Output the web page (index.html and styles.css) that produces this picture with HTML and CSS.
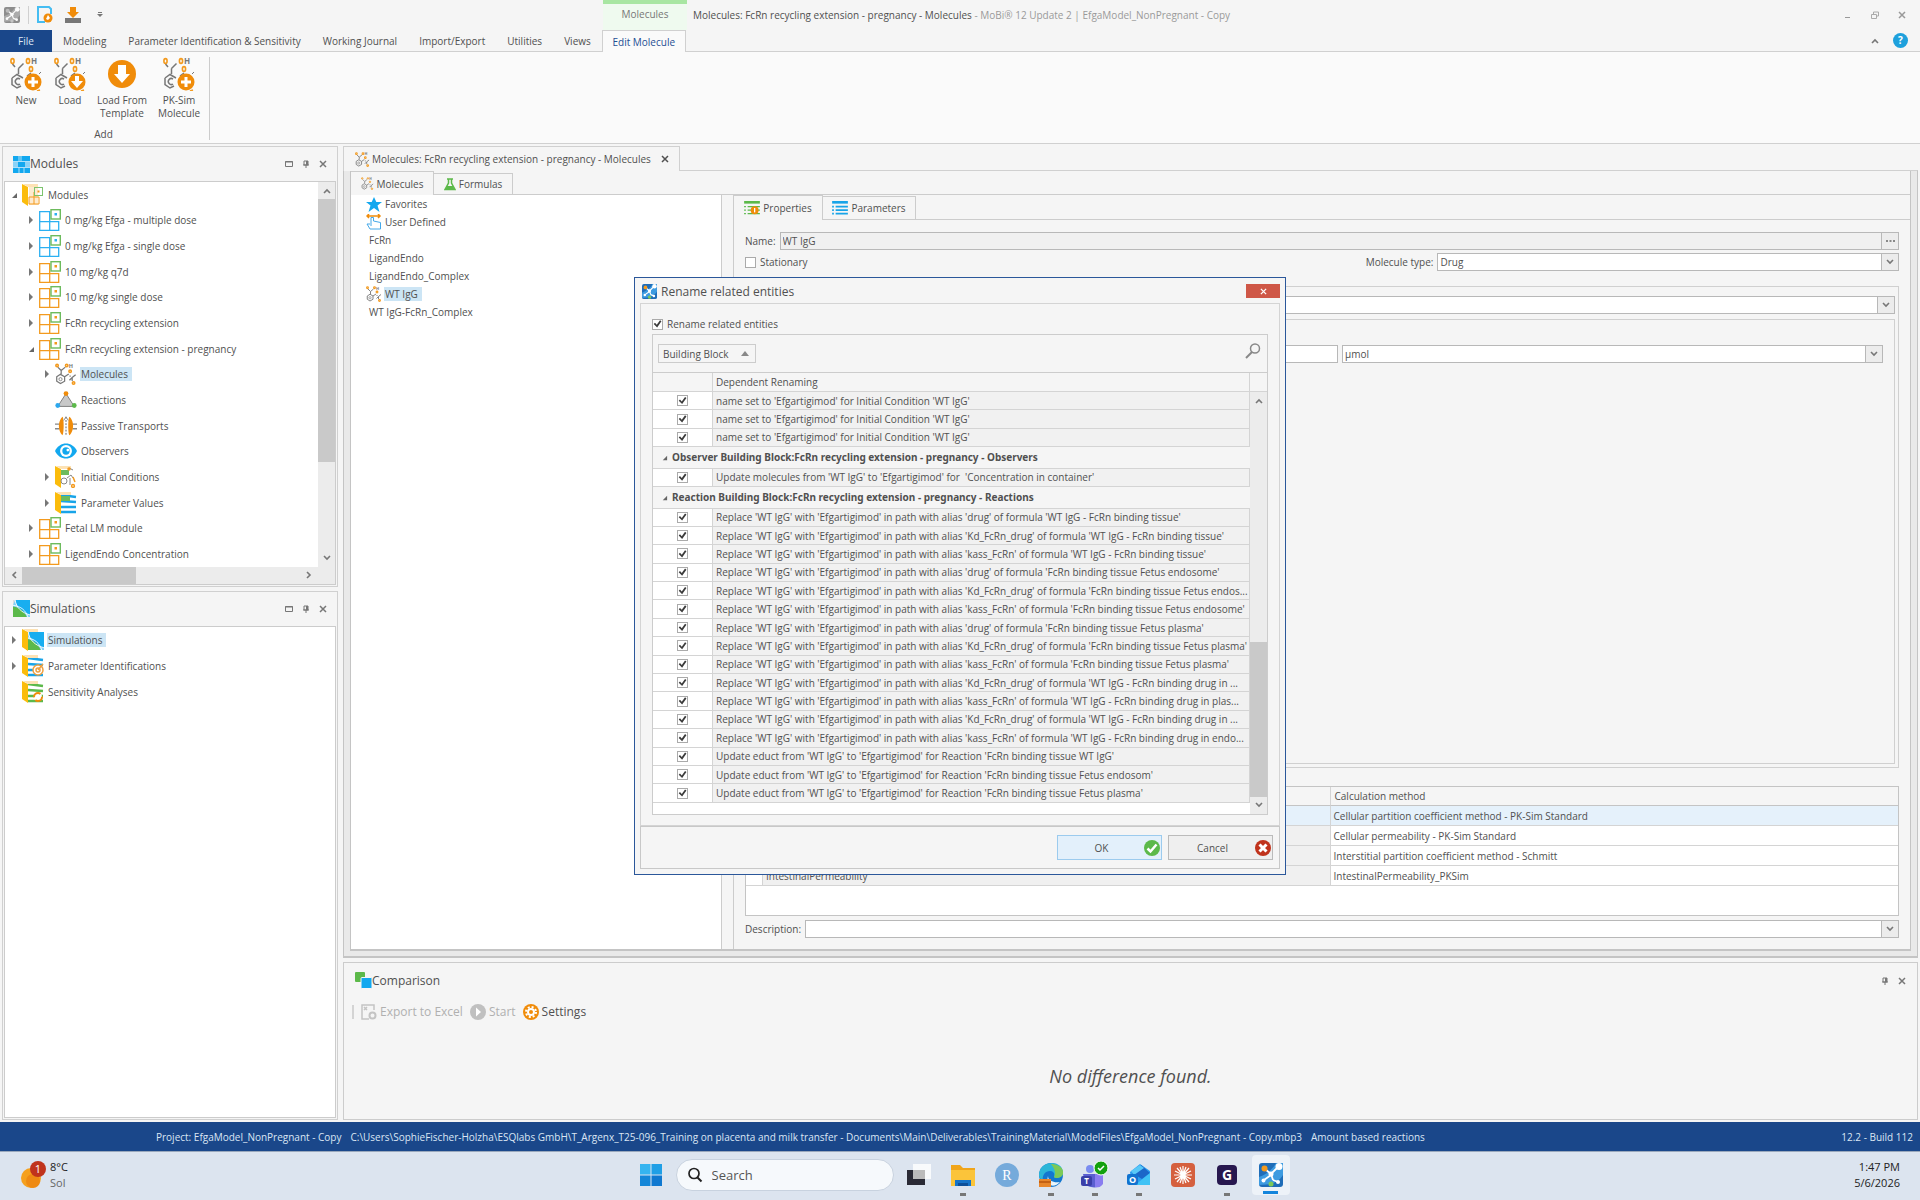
FILE: index.html
```html
<!DOCTYPE html>
<html lang="en">
<head>
<meta charset="utf-8">
<title>MoBi 12 - EfgaModel_NonPregnant</title>
<link rel="stylesheet" href="styles.css">
</head>
<body>
<svg class="sprite" aria-hidden="true">
  <symbol id="mol" viewBox="0 0 32 32">
    <g fill="none" stroke="#777" stroke-width="1.800"><path d="M2.500 20l5.500-3.500 6 3.500v6.500L8 30l-5.500-3.500zM14 20l6-4M9 16V11M9 11L4 6M9 11l6-5M22 20v-2M21 25l4-4 5-4M25 21v5"/><circle cx="8" cy="23.500" r="2.300" stroke-width="1.200"/></g>
    <g fill="none" stroke="#f39a1e" stroke-width="2.200"><circle cx="3" cy="3.500" r="1.800"/><circle cx="17" cy="3.500" r="1.800"/><circle cx="22" cy="12" r="1.800"/><circle cx="27" cy="29" r="1.800"/></g>
    <text x="20" y="7" font-size="8" font-weight="700" fill="#777">H</text>
  </symbol>
  <symbol id="molbig" viewBox="0 0 32 34">
    <g fill="none" stroke="#777" stroke-width="1.500"><path d="M2 21l5-3.500 6 3.500M2 21v6.500l5 3.500 4-2M8.500 17v-5.500M8.500 11.500l5-5M5 10L2.500 7M17 19l4-3"/><path d="M10 22a3 3 0 1 0 0 5"/></g>
    <g fill="none" stroke="#f39a1e" stroke-width="1.600"><ellipse cx="2.500" cy="4" rx="1.600" ry="2.400"/><ellipse cx="18" cy="4" rx="1.600" ry="2.400"/><ellipse cx="21" cy="12" rx="1.600" ry="2.400"/></g>
    <text x="21" y="7" font-size="8" font-weight="700" fill="#777">H</text>
    <circle cx="23" cy="25" r="8.500" fill="#f08c0a"/>
    <path d="M27 34l3-1" stroke="#f39a1e" stroke-width="1.500"/><path d="M29 17l2-2" stroke="#777"/>
  </symbol>
  <symbol id="plus" viewBox="0 0 32 34"><path d="M23 20v10M18 25h10" stroke="#fff" stroke-width="3"/></symbol>
  <symbol id="down" viewBox="0 0 32 34"><path d="M21 19h4v5h4l-6 7-6-7h4z" fill="#fff"/></symbol>
  <symbol id="module" viewBox="0 0 22 22">
    <path d="M.7 2.700h10V21.300H.7zM.7 12.700h19V21.300H.7M10.700 4v17" fill="none" stroke="currentColor" stroke-width="1.300"/>
    <rect x="12" y=".7" width="9.300" height="9.300" fill="#fff" stroke="#6dbb5d" stroke-width="1.400"/>
    <rect x="15.500" y="4" width="2.500" height="2.500" fill="currentColor"/>
  </symbol>
  <symbol id="door" viewBox="0 0 22 22"><path d="M0 0l6 3v19l-6-4z" fill="#fbbc0c"/><path d="M1 0h15v3H6z" fill="#fde2b4"/></symbol>
  <symbol id="fmod" viewBox="0 0 22 22"><use href="#door"/><path d="M7 3h9v18H7z" fill="#fdebd0"/><path d="M7 13h10v7H7zM12 8v12" fill="none" stroke="#f39a1e"/><rect x="12.500" y="3.500" width="8" height="8" fill="none" stroke="#7cc46d"/><rect x="15.500" y="6.500" width="2" height="2" fill="#f39a1e"/></symbol>
  <symbol id="fic" viewBox="0 0 22 22"><use href="#door"/><rect x="6" y="4" width="8" height="5" fill="#6dbb5d"/><g fill="none" stroke="#888"><circle cx="9" cy="15" r="3"/><path d="M12 12l4-3 2 3M15 12v7M14 2l4 2"/></g><g fill="none" stroke="#f39a1e" stroke-width="1.500"><circle cx="14" cy="3" r="1"/><circle cx="18" cy="20" r="1.400"/><path d="M18 11l2 5"/></g></symbol>
  <symbol id="lines" viewBox="0 0 22 22"><path d="M6 3l15 2M6 9l15 1M6 15h15M6 20h15" stroke="currentColor" stroke-width="2.600"/></symbol>
  <symbol id="fpv" viewBox="0 0 22 22"><use href="#lines" color="#18a4e8"/><use href="#door"/><rect x="6" y="4" width="9" height="5" fill="#6dbb5d"/></symbol>
  <symbol id="fpi" viewBox="0 0 22 22"><use href="#lines" color="#18a4e8"/><use href="#door"/><g fill="#fff" stroke="#f0a040" stroke-width="1.500"><circle cx="16" cy="15" r="5"/><circle cx="16" cy="15" r="2"/><path d="M16 15l5-6"/></g></symbol>
  <symbol id="fsa" viewBox="0 0 22 22"><use href="#lines" color="#5cb94a"/><use href="#door"/><circle cx="16" cy="16" r="4" fill="#fff" stroke="#f08c0a" stroke-width="2" stroke-dasharray="9 3"/></symbol>
  <symbol id="sim" viewBox="0 0 16 16"><path d="M2 0h14v15C8 13 3 7 2 0z" fill="#18aef0"/><path d="M2 0c1 7 6 12 14 14v2H0V0z" fill="#7fd0f8"/><path d="M0 0h2l-2 5z" fill="#ddd"/><path d="M0 6c7 1 11 5 13 10H0z" fill="#5cb94a"/><path d="M0 5c8 1 12 5 14 11M2 0c1 7 6 12 14 14" fill="none" stroke="#fff" stroke-width=".8"/></symbol>
  <symbol id="fsim" viewBox="0 0 22 22"><use href="#sim" x="4" y="3" width="18" height="18"/><use href="#door"/></symbol>
  <symbol id="react" viewBox="0 0 24 20"><path d="M12 3L3 17h18z" fill="#c8c8c8" stroke="#777"/><circle cx="12" cy="3" r="2.600" fill="#f08c0a"/><circle cx="3" cy="16" r="2.600" fill="#2ca8ee"/><circle cx="21" cy="16" r="2.600" fill="#5cb94a"/></symbol>
  <symbol id="passive" viewBox="0 0 24 22"><path d="M0 9h5M0 14h5M19 9h5M19 14h5" stroke="#888" stroke-width="1.500"/><path d="M8 1c-5 5-5 15 0 20 2 0 2-20 0-20zM16 1c5 5 5 15 0 20-2 0-2-20 0-20z" fill="#f08c0a"/><path d="M12 1v20" stroke="#555" stroke-dasharray="2 1.500"/><path d="M9.500 5L12 1l2.500 4" fill="none" stroke="#888"/></symbol>
  <symbol id="eye" viewBox="0 0 24 18"><path d="M0 9C5-2 19-2 24 9 19 20 5 20 0 9z" fill="#12a8ef"/><circle cx="12" cy="9" r="6.500" fill="#fff"/><circle cx="12" cy="9" r="4" fill="#12a8ef"/><circle cx="14" cy="8" r="1.500" fill="#fff"/></symbol>
  <symbol id="expand" viewBox="0 0 8 8"><path d="M2 0l4 4-4 4z" fill="#777"/></symbol>
  <symbol id="collapse" viewBox="0 0 8 8"><path d="M7 2v5H2z" fill="#666"/></symbol>
  <symbol id="cu" viewBox="0 0 8 8"><path d="M1 6l3-3 3 3" fill="none" stroke="#777" stroke-width="1.600"/></symbol>
  <symbol id="cd" viewBox="0 0 8 8"><path d="M1 2l3 3 3-3" fill="none" stroke="#777" stroke-width="1.600"/></symbol>
  <symbol id="cl" viewBox="0 0 8 8"><path d="M6 1L3 4l3 3" fill="none" stroke="#777" stroke-width="1.600"/></symbol>
  <symbol id="cr" viewBox="0 0 8 8"><path d="M2 1l3 3-3 3" fill="none" stroke="#777" stroke-width="1.600"/></symbol>
  <symbol id="x" viewBox="0 0 8 8"><path d="M1 1l6 6M7 1L1 7" fill="none" stroke="currentColor" stroke-width="1.500"/></symbol>
  <symbol id="win" viewBox="0 0 8 8"><path d="M.5 1.500h7v5h-7zM0 2h8" fill="none" stroke="#777"/></symbol>
  <symbol id="pin" viewBox="0 0 8 8"><path d="M2 1h4v4H2zM1 5h6M4 5v3" fill="none" stroke="#777"/><path d="M4 1h2v4H4z" fill="#777"/></symbol>
  <symbol id="mobi" viewBox="0 0 24 24"><rect width="24" height="24" rx="3" fill="#1f6db8"/><path d="M0 14c8-3 14-8 17-14h7v12c-5 8-12 10-24 10z" fill="#3d9be0"/><path d="M6 6l6 5 7-7M12 11l2 6M12 12l-7 5M14 17l5 2" stroke="#fff" stroke-width="1.800" fill="none"/><circle cx="5.500" cy="5.500" r="3" fill="#f39a1e"/><g fill="#fff"><circle cx="20" cy="3.500" r="3.500"/><circle cx="12" cy="11" r="2.500"/><circle cx="19" cy="19" r="2"/><circle cx="4.500" cy="17.500" r="2"/></g><circle cx="12" cy="21" r="2.500" fill="#7cc957"/></symbol>
  <symbol id="props" viewBox="0 0 18 16"><path d="M0 1.500h18" stroke="#5cb94a" stroke-width="3"/><path d="M0 6.500h2M4 6.500h14M0 10.500h2M4 10.500h14M0 14.500h2M4 14.500h14" stroke="#5cb94a" stroke-width="1.500"/><circle cx="12" cy="10.500" r="4.500" fill="#f08c0a"/><path d="M12 8v5" stroke="#fff" stroke-width="1.500"/></symbol>
  <symbol id="params" viewBox="0 0 18 16"><path d="M0 1.500h18" stroke="#18a4e8" stroke-width="3"/><path d="M0 6.500h2M4 6.500h14M0 10.500h2M4 10.500h14M0 14.500h2M4 14.500h14" stroke="#18a4e8" stroke-width="2"/></symbol>
</svg>

<div class="desktop">
<div class="app">
  <header>
    <div class="titlebar">
      <div class="quick">
        <svg width="16" height="16" class="grey"><use href="#mobi"/></svg>
        <span class="bar"></span>
        <button aria-label="Open project"><svg width="16" height="18" viewBox="0 0 16 18"><path d="M14 8V3l-2-2H1v15h7" fill="none" stroke="#45bdf2" stroke-width="2"/><circle cx="11" cy="12" r="4.500" fill="#f08c0a"/><path d="M11 9l2 3-2 2-2-1z" fill="#fff"/></svg></button>
        <button aria-label="Save project"><svg width="16" height="16" viewBox="0 0 16 16"><path d="M5 0h6v5h3l-6 6-6-6h3z" fill="#f08c0a"/><path d="M0 11h16v5H0z" fill="#777"/></svg></button>
        <button aria-label="Customize"><svg width="6" height="6" viewBox="0 0 6 6"><path d="M1 .5h4" stroke="#777"/><path d="M0 2h6L3 5z" fill="#777"/></svg></button>
      </div>
      <div class="context">Molecules</div>
      <h1>Molecules: FcRn recycling extension - pregnancy - Molecules <span>- MoBi® 12 Update 2 | EfgaModel_NonPregnant - Copy</span></h1>
      <div class="winbtns">
        <button aria-label="Minimize"><svg width="8" height="8"><path d="M1 6.500h5" stroke="#999"/></svg></button>
        <button aria-label="Restore"><svg width="8" height="8"><path d="M.5 3.500h5v4h-5zM2.500 3v-2h5v4H6" fill="none" stroke="#aaa"/></svg></button>
        <button aria-label="Close"><svg width="8" height="8" color="#999"><use href="#x"/></svg></button>
      </div>
    </div>
    <nav class="tabs">
      <button class="file">File</button>
      <button>Modeling</button>
      <button>Parameter Identification &amp; Sensitivity</button>
      <button>Working Journal</button>
      <button>Import/Export</button>
      <button>Utilities</button>
      <button>Views</button>
      <button class="active">Edit Molecule</button>
      <span class="help"><svg width="8" height="8"><use href="#cu"/></svg><span class="q">?</span></span>
    </nav>
    <div class="ribbon">
      <div class="group">
        <div class="big">
          <button class="b1"><svg width="32" height="34"><use href="#molbig"/><use href="#plus"/></svg>New</button>
          <button class="b1"><svg width="32" height="34"><use href="#molbig"/><use href="#down"/></svg>Load</button>
          <button class="b2"><svg width="32" height="34" viewBox="0 0 32 34"><circle cx="16" cy="17" r="14" fill="#f08c0a"/><path d="M12 8h8v9h4l-8 9-8-9h4z" fill="#fff"/></svg>Load From<br>Template</button>
          <button class="b3"><svg width="32" height="34"><use href="#molbig"/><use href="#plus"/></svg>PK-Sim<br>Molecule</button>
        </div>
        <div class="gname">Add</div>
      </div>
    </div>
  </header>

  <div class="work">
    <aside class="left">
      <section class="panel p1">
        <div class="phead"><svg width="17" height="17" viewBox="0 0 17 17"><path d="M0 0h17v17H0z" fill="#12a8ef"/><path d="M0 5.500h17M0 11.500h17M6 0v5M11 12v5M8 0v5M6 12v5" stroke="#d8effb" stroke-width=".8"/><path d="M0 6h5v5H0zM12 6h5v5h-5z" fill="#8bd3f7"/></svg><h2>Modules</h2><span class="pbtns"><svg width="8" height="8"><use href="#win"/></svg><svg width="8" height="8"><use href="#pin"/></svg><svg width="8" height="8"><use href="#x"/></svg></span></div>
        <div class="scroller">
          <ul class="tree">
            <li><svg class="e"><use href="#collapse"/></svg><svg class="i"><use href="#fmod"/></svg><span>Modules</span></li>
            <li class="l1 blue"><svg class="e"><use href="#expand"/></svg><svg class="i"><use href="#module"/></svg><span>0 mg/kg Efga - multiple dose</span></li>
            <li class="l1 blue"><svg class="e"><use href="#expand"/></svg><svg class="i"><use href="#module"/></svg><span>0 mg/kg Efga - single dose</span></li>
            <li class="l1"><svg class="e"><use href="#expand"/></svg><svg class="i"><use href="#module"/></svg><span>10 mg/kg q7d</span></li>
            <li class="l1"><svg class="e"><use href="#expand"/></svg><svg class="i"><use href="#module"/></svg><span>10 mg/kg single dose</span></li>
            <li class="l1"><svg class="e"><use href="#expand"/></svg><svg class="i"><use href="#module"/></svg><span>FcRn recycling extension</span></li>
            <li class="l1"><svg class="e"><use href="#collapse"/></svg><svg class="i"><use href="#module"/></svg><span>FcRn recycling extension - pregnancy</span></li>
            <li class="l2"><svg class="e"><use href="#expand"/></svg><svg class="i"><use href="#mol"/></svg><span class="sel">Molecules</span></li>
            <li class="l2"><svg class="e"></svg><svg class="i"><use href="#react"/></svg><span>Reactions</span></li>
            <li class="l2"><svg class="e"></svg><svg class="i"><use href="#passive"/></svg><span>Passive Transports</span></li>
            <li class="l2"><svg class="e"></svg><svg class="i"><use href="#eye"/></svg><span>Observers</span></li>
            <li class="l2"><svg class="e"><use href="#expand"/></svg><svg class="i"><use href="#fic"/></svg><span>Initial Conditions</span></li>
            <li class="l2"><svg class="e"><use href="#expand"/></svg><svg class="i"><use href="#fpv"/></svg><span>Parameter Values</span></li>
            <li class="l1"><svg class="e"><use href="#expand"/></svg><svg class="i"><use href="#module"/></svg><span>Fetal LM module</span></li>
            <li class="l1"><svg class="e"><use href="#expand"/></svg><svg class="i"><use href="#module"/></svg><span>LigendEndo Concentration</span></li>
          </ul>
          <div class="vsb"><svg width="8" height="8"><use href="#cu"/></svg><div class="track"><div class="thumb tall"></div></div><svg width="8" height="8"><use href="#cd"/></svg></div>
          <div class="hsb"><svg width="8" height="8"><use href="#cl"/></svg><div class="track"><div class="thumb"></div></div><svg width="8" height="8"><use href="#cr"/></svg></div>
          <div class="nook"></div>
        </div>
      </section>
      <section class="panel p2">
        <div class="phead"><svg width="17" height="17"><use href="#sim"/></svg><h2>Simulations</h2><span class="pbtns"><svg width="8" height="8"><use href="#win"/></svg><svg width="8" height="8"><use href="#pin"/></svg><svg width="8" height="8"><use href="#x"/></svg></span></div>
        <ul class="tree fixed">
          <li><svg class="e"><use href="#expand"/></svg><svg class="i"><use href="#fsim"/></svg><span class="sel">Simulations</span></li>
          <li><svg class="e"><use href="#expand"/></svg><svg class="i"><use href="#fpi"/></svg><span>Parameter Identifications</span></li>
          <li><svg class="e"></svg><svg class="i"><use href="#fsa"/></svg><span>Sensitivity Analyses</span></li>
        </ul>
      </section>
    </aside>

    <main>
      <div class="doctabs"><button><svg width="15" height="15"><use href="#mol"/></svg>Molecules: FcRn recycling extension - pregnancy - Molecules<svg class="dx" width="8" height="8"><use href="#x"/></svg></button></div>
      <div class="frame">
        <div class="doc">
          <div class="subtabs"><button class="on"><svg width="13" height="13"><use href="#mol"/></svg>Molecules</button><button><svg width="12" height="13" viewBox="0 0 12 13"><path d="M3 1h6M4.500 1v4L1 11.500h10L7.500 5V1" fill="none" stroke="#5cb94a" stroke-width="1.500"/><path d="M3 8h6l2 4H1z" fill="#5cb94a"/></svg>Formulas</button></div>
          <div class="split">
            <ul class="mols">
              <li class="ic"><svg width="16" height="15" viewBox="0 0 16 15"><path d="M8 0l2.300 5H16l-4.500 3.500L13.500 15 8 11l-5.500 4 2-6.500L0 5h5.700z" fill="#12a8ef"/></svg><span>Favorites</span></li>
              <li class="ic"><svg width="16" height="16" viewBox="0 0 16 16"><path d="M1 2h13M3 0L1 2l2 2M12 0l2 2-2 2" fill="none" stroke="#f08c0a" stroke-width="1.500"/><path d="M5 12V3.500h2.500V7l7 1.500V15H4L1 10h3" fill="#fff" stroke="#45a8e8"/></svg><span>User Defined</span></li>
              <li><span>FcRn</span></li>
              <li><span>LigandEndo</span></li>
              <li><span>LigandEndo_Complex</span></li>
              <li class="ic"><svg width="16" height="16"><use href="#mol"/></svg><span class="sel">WT IgG</span></li>
              <li><span>WT IgG-FcRn_Complex</span></li>
            </ul>
            <div class="editor">
              <div class="subtabs"><button class="on"><svg width="16" height="14"><use href="#props"/></svg>Properties</button><button><svg width="16" height="14"><use href="#params"/></svg>Parameters</button></div>
              <form class="page">
                <div class="row"><label for="nm">Name:</label><div class="box ro"><input id="nm" value="WT IgG" readonly><button type="button" aria-label="Edit name"><svg width="9" height="2" viewBox="0 0 9 2"><path d="M0 0h2v2H0zM3.500 0h2v2h-2zM7 0h2v2H7z" fill="#888"/></svg></button></div></div>
                <div class="row sp"><label class="ck"><input type="checkbox">Stationary</label><label class="push" for="mt">Molecule type:</label><div class="box w40"><select id="mt"><option>Drug</option></select><span class="dd"><svg width="8" height="8"><use href="#cd"/></svg></span></div></div>
                <div class="outer">
                  <div class="box"><select aria-label="Default start amount type"><option></option></select><span class="dd"><svg width="8" height="8"><use href="#cd"/></svg></span></div>
                  <div class="inner">
                    <div class="row amount"><div class="box"><input aria-label="Start amount"></div><div class="box"><select aria-label="Unit"><option>µmol</option></select><span class="dd"><svg width="8" height="8"><use href="#cd"/></svg></span></div></div>
                  </div>
                </div>
                <div class="tbox">
                  <table class="calc">
                    <thead><tr><th class="ind"></th><th></th><th>Calculation method</th></tr></thead>
                    <tbody>
                      <tr class="hot"><td></td><td></td><td>Cellular partition coefficient method - PK-Sim Standard</td></tr>
                      <tr><td></td><td></td><td>Cellular permeability - PK-Sim Standard</td></tr>
                      <tr><td></td><td></td><td>Interstitial partition coefficient method - Schmitt</td></tr>
                      <tr><td></td><td>IntestinalPermeability</td><td>IntestinalPermeability_PKSim</td></tr>
                    </tbody>
                  </table>
                </div>
                <div class="row"><label for="ds">Description:</label><div class="box"><input id="ds"><span class="dd"><svg width="8" height="8"><use href="#cd"/></svg></span></div></div>
              </form>
            </div>
          </div>
        </div>
      </div>
      <section class="compare">
        <div class="chead"><svg width="17" height="17" viewBox="0 0 17 17"><rect y="0" width="10" height="10" rx="1" fill="#5cb94a"/><rect x="6" y="5.500" width="11" height="11" rx="1" fill="#12a8ef" stroke="#f5f5f5"/></svg><h2>Comparison</h2><span class="pbtns"><svg width="8" height="8"><use href="#pin"/></svg><svg width="8" height="8"><use href="#x"/></svg></span></div>
        <div class="ctools">
          <span class="grip"></span>
          <button disabled><svg width="16" height="16" viewBox="0 0 16 16"><path d="M13 6V1H1v14h7M3 3l3 3M6 3L3 6" fill="none" stroke="#c4c4c4" stroke-width="1.500"/><circle cx="11.500" cy="11.500" r="3" fill="none" stroke="#c4c4c4" stroke-width="2"/></svg>Export to Excel</button>
          <button disabled><svg width="16" height="16" viewBox="0 0 16 16"><circle cx="8" cy="8" r="8" fill="#c0c0c0"/><path d="M6 3.500l5 4.500-5 4.500z" fill="#fff"/></svg>Start</button>
          <button><svg width="16" height="16" viewBox="0 0 16 16"><circle cx="8" cy="8" r="8" fill="#f08c0a"/><circle cx="8" cy="8" r="3" fill="none" stroke="#fff" stroke-width="2"/><circle cx="8" cy="8" r="5" fill="none" stroke="#fff" stroke-width="2" stroke-dasharray="2 1.930"/></svg>Settings</button>
        </div>
        <p class="nodiff">No difference found.</p>
      </section>
    </main>
  </div>

  <footer class="status"><span>Project: EfgaModel_NonPregnant - Copy</span><span>C:\Users\SophieFischer-Holzha\ESQlabs GmbH\T_Argenx_T25-096_Training on placenta and milk transfer - Documents\Main\Deliverables\TrainingMaterial\ModelFiles\EfgaModel_NonPregnant - Copy.mbp3</span><span>Amount based reactions</span><span class="ver">12.2 - Build 112</span></footer>

  <div class="overlay">
    <div class="dialog" role="dialog" aria-labelledby="dt">
      <div class="dhead"><svg width="15" height="15"><use href="#mobi"/></svg><h2 id="dt">Rename related entities</h2><button aria-label="Close dialog"><svg width="7" height="7"><use href="#x"/></svg></button></div>
      <div class="dbody">
        <label class="ck"><input type="checkbox" checked>Rename related entities</label>
        <div class="grid">
          <div class="gpanel"><button>Building Block<svg width="8" height="5" viewBox="0 0 8 5"><path d="M4 0l4 5H0z" fill="#888"/></svg></button><svg width="16" height="17" viewBox="0 0 16 17"><circle cx="10" cy="5.500" r="4.500" fill="none" stroke="#888" stroke-width="1.500"/><path d="M7 9l-6 6" stroke="#888" stroke-width="2"/></svg></div>
          <div class="gmain">
            <table class="deps">
              <thead><tr><th class="c"></th><th>Dependent Renaming</th></tr></thead>
              <tbody>
                <tr><td><input type="checkbox" checked aria-label="Apply"></td><td>name set to 'Efgartigimod' for Initial Condition 'WT IgG'</td></tr>
                <tr><td><input type="checkbox" checked aria-label="Apply"></td><td>name set to 'Efgartigimod' for Initial Condition 'WT IgG'</td></tr>
                <tr><td><input type="checkbox" checked aria-label="Apply"></td><td>name set to 'Efgartigimod' for Initial Condition 'WT IgG'</td></tr>
                <tr class="g"><th colspan="2"><svg width="7" height="7"><use href="#collapse"/></svg>Observer Building Block:FcRn recycling extension - pregnancy - Observers</th></tr>
                <tr><td><input type="checkbox" checked aria-label="Apply"></td><td>Update molecules from 'WT IgG' to 'Efgartigimod' for &nbsp;'Concentration in container'</td></tr>
                <tr class="g"><th colspan="2"><svg width="7" height="7"><use href="#collapse"/></svg>Reaction Building Block:FcRn recycling extension - pregnancy - Reactions</th></tr>
                <tr><td><input type="checkbox" checked aria-label="Apply"></td><td>Replace 'WT IgG' with 'Efgartigimod' in path with alias 'drug' of formula 'WT IgG - FcRn binding tissue'</td></tr>
                <tr><td><input type="checkbox" checked aria-label="Apply"></td><td>Replace 'WT IgG' with 'Efgartigimod' in path with alias 'Kd_FcRn_drug' of formula 'WT IgG - FcRn binding tissue'</td></tr>
                <tr><td><input type="checkbox" checked aria-label="Apply"></td><td>Replace 'WT IgG' with 'Efgartigimod' in path with alias 'kass_FcRn' of formula 'WT IgG - FcRn binding tissue'</td></tr>
                <tr><td><input type="checkbox" checked aria-label="Apply"></td><td>Replace 'WT IgG' with 'Efgartigimod' in path with alias 'drug' of formula 'FcRn binding tissue Fetus endosome'</td></tr>
                <tr><td><input type="checkbox" checked aria-label="Apply"></td><td>Replace 'WT IgG' with 'Efgartigimod' in path with alias 'Kd_FcRn_drug' of formula 'FcRn binding tissue Fetus endos...</td></tr>
                <tr><td><input type="checkbox" checked aria-label="Apply"></td><td>Replace 'WT IgG' with 'Efgartigimod' in path with alias 'kass_FcRn' of formula 'FcRn binding tissue Fetus endosome'</td></tr>
                <tr><td><input type="checkbox" checked aria-label="Apply"></td><td>Replace 'WT IgG' with 'Efgartigimod' in path with alias 'drug' of formula 'FcRn binding tissue Fetus plasma'</td></tr>
                <tr><td><input type="checkbox" checked aria-label="Apply"></td><td>Replace 'WT IgG' with 'Efgartigimod' in path with alias 'Kd_FcRn_drug' of formula 'FcRn binding tissue Fetus plasma'</td></tr>
                <tr><td><input type="checkbox" checked aria-label="Apply"></td><td>Replace 'WT IgG' with 'Efgartigimod' in path with alias 'kass_FcRn' of formula 'FcRn binding tissue Fetus plasma'</td></tr>
                <tr><td><input type="checkbox" checked aria-label="Apply"></td><td>Replace 'WT IgG' with 'Efgartigimod' in path with alias 'Kd_FcRn_drug' of formula 'WT IgG - FcRn binding drug in ...</td></tr>
                <tr><td><input type="checkbox" checked aria-label="Apply"></td><td>Replace 'WT IgG' with 'Efgartigimod' in path with alias 'kass_FcRn' of formula 'WT IgG - FcRn binding drug in plas...</td></tr>
                <tr><td><input type="checkbox" checked aria-label="Apply"></td><td>Replace 'WT IgG' with 'Efgartigimod' in path with alias 'Kd_FcRn_drug' of formula 'WT IgG - FcRn binding drug in ...</td></tr>
                <tr><td><input type="checkbox" checked aria-label="Apply"></td><td>Replace 'WT IgG' with 'Efgartigimod' in path with alias 'kass_FcRn' of formula 'WT IgG - FcRn binding drug in endo...</td></tr>
                <tr><td><input type="checkbox" checked aria-label="Apply"></td><td>Update educt from 'WT IgG' to 'Efgartigimod' for Reaction 'FcRn binding tissue WT IgG'</td></tr>
                <tr><td><input type="checkbox" checked aria-label="Apply"></td><td>Update educt from 'WT IgG' to 'Efgartigimod' for Reaction 'FcRn binding tissue Fetus endosom'</td></tr>
                <tr><td><input type="checkbox" checked aria-label="Apply"></td><td>Update educt from 'WT IgG' to 'Efgartigimod' for Reaction 'FcRn binding tissue Fetus plasma'</td></tr>
              </tbody>
            </table>
            <div class="gside"><div class="corner"></div><div class="vsb"><svg width="8" height="8"><use href="#cu"/></svg><div class="track end"><div class="thumb"></div></div><svg width="8" height="8"><use href="#cd"/></svg></div></div>
          </div>
        </div>
      </div>
      <div class="dfoot">
        <button class="ok"><span>OK</span><svg width="16" height="16" viewBox="0 0 16 16"><circle cx="8" cy="8" r="8" fill="#5cb94a"/><path d="M3.500 8.500l3 3 6-7" fill="none" stroke="#fff" stroke-width="2.500"/></svg></button>
        <button><span>Cancel</span><svg width="16" height="16" viewBox="0 0 16 16"><circle cx="8" cy="8" r="8" fill="#c0331c"/><path d="M4.500 4.500l7 7M11.500 4.500l-7 7" stroke="#fff" stroke-width="3"/></svg></button>
      </div>
    </div>
  </div>
</div>

<div class="taskbar">
  <div class="weather"><svg width="26" height="28" viewBox="0 0 26 28"><circle cx="10" cy="17" r="10" fill="#f5a01e"/><circle cx="12" cy="20" r="7" fill="#ee8a14"/><circle cx="17" cy="8" r="8" fill="#c0331c"/><text x="17" y="12" font-size="11" text-anchor="middle" fill="#fff">1</text></svg><div>8°C<br><span>Sol</span></div></div>
  <div class="center">
    <button class="t" aria-label="Start"><svg width="22" height="24" viewBox="0 0 22 24"><path d="M0 1h10.500v10.500H0z" fill="#35b4f0"/><path d="M11.500 1H22v10.500H11.500z" fill="#1f9fe6"/><path d="M0 12.500h10.500V23H0z" fill="#1486d8"/><path d="M11.500 12.500H22V23H11.500z" fill="#0f78d0"/></svg></button>
    <label class="search"><svg width="16" height="16" viewBox="0 0 16 16"><circle cx="7" cy="6.500" r="5" fill="none" stroke="#222" stroke-width="1.700"/><path d="M10.500 10.500l4 4" stroke="#222" stroke-width="2"/></svg><input type="search" placeholder="Search" aria-label="Search"></label>
    <button class="t" aria-label="Task view"><svg width="24" height="24" viewBox="0 0 24 24"><path d="M0 7h18v15H0z" fill="#2a2a35"/><path d="M6 1h18v15H6z" fill="#fff" fill-opacity=".8"/><path d="M6 7h12v9H6z" fill="#bbb"/></svg></button>
    <button class="t run" aria-label="Explorer"><svg width="24" height="24" viewBox="0 0 24 24"><path d="M0 2h9l3 3h12v18H0z" fill="#f0a51a"/><path d="M0 7h24v16H0z" fill="#fbc43a"/><path d="M4 17h16v6H4z" fill="#1673c8"/><path d="M7 20h10v3H7z" fill="#0d4f99"/></svg></button>
    <button class="t" aria-label="RStudio"><svg width="24" height="24" viewBox="0 0 24 24"><circle cx="12" cy="12" r="12" fill="#75aadb"/><text x="12" y="17" font-size="14" text-anchor="middle" fill="#fff" font-family="Liberation Serif">R</text></svg></button>
    <button class="t run" aria-label="Edge"><svg width="24" height="24" viewBox="0 0 24 24"><circle cx="12" cy="12" r="12" fill="#1377cf"/><path d="M0 12C0-3 24-4 24 10c0 5-8 6-9 4 1-3 0-6-4-6-6 0-8 6-7 10C1 16 0 14 0 12z" fill="#2cb6d8"/><path d="M14 1c7 1 11 5 10 10-1 4-7 5-9 3 2-4 1-8-3-13z" fill="#7cc957"/><path d="M9 13c0 5 6 7 12 6-5 6-15 5-12-6z" fill="#e8f4fb"/><path d="M0 16h12v8H0z" fill="#e8862a"/><path d="M0 19h12" stroke="#b8540c" stroke-width="1.500"/></svg></button>
    <button class="t run" aria-label="Teams"><svg width="28" height="28" viewBox="0 0 28 28"><circle cx="9" cy="8" r="4" fill="#7a8cf0"/><path d="M2 13h20v8c0 7-16 7-18 1z" fill="#5b5fd0"/><path d="M14 13h8v8c0 4-4 6-8 5z" fill="#8a7df0"/><rect y="15" width="11" height="10" rx="2" fill="#3a3fa8"/><text x="5.500" y="23" font-size="8" font-weight="700" text-anchor="middle" fill="#fff">T</text><circle cx="20" cy="7" r="7" fill="#13a10e" stroke="#fff"/><path d="M17 7l2 2 4-4" fill="none" stroke="#fff" stroke-width="1.500"/></svg></button>
    <button class="t run" aria-label="Outlook"><svg width="24" height="24" viewBox="0 0 24 24"><path d="M3 9L13 1l10 7v14H5z" fill="#2a9df0"/><path d="M14 2l9 8-8 6-10-6z" fill="#1b66c8"/><path d="M4 8l9-6 4 3-10 7z" fill="#58c8f7"/><path d="M8 22h15V10z" fill="#3fc2f5"/><rect y="11" width="11" height="11" rx="2" fill="#1173d0"/><text x="5.500" y="20" font-size="9" font-weight="700" text-anchor="middle" fill="#fff">O</text></svg></button>
    <button class="t" aria-label="Claude"><svg width="24" height="24" viewBox="0 0 24 24"><rect width="24" height="24" rx="4" fill="#d5603f"/><path d="M12 3v18M3 12h18M6 5l12 14M18 5L6 19M9 4l6 16M15 4L9 20M4 8l16 8M20 8L4 16" stroke="#fff" stroke-width="1.200"/></svg></button>
    <button class="t run" aria-label="Grammarly"><svg width="20" height="22" viewBox="0 0 20 22"><rect y="1" width="20" height="20" rx="4" fill="#27174f"/><text x="10" y="16" font-size="14" font-weight="700" text-anchor="middle" fill="#fff">G</text></svg></button>
    <button class="t cur" aria-label="MoBi"><svg width="24" height="24"><use href="#mobi"/></svg></button>
  </div>
  <div class="clock">1:47 PM<br>5/6/2026</div>
</div>
</div>
</body>
</html>
```
FILE: styles.css
```css
* { box-sizing: border-box; }
body { margin: 0; font: 10px/14px "Open Sans", "Noto Sans", sans-serif; color: #505050; background: #f5f5f5; }
button, input, select { font: inherit; color: inherit; background: none; border: 0; padding: 0; margin: 0; outline: 0; }
h1, h2, ul, p { margin: 0; padding: 0; font-size: 10px; font-weight: 400; list-style: none; }
h2 { font-size: 12px; line-height: 16px; }
svg { flex: none; display: block; }
.sprite { display: none; }
.desktop { min-height: 100vh; display: flex; flex-direction: column; }
.app { flex: 1; display: flex; flex-direction: column; position: relative; min-width: 0; }

.titlebar { display: flex; height: 30px; align-items: center; }
.quick { display: flex; align-items: center; width: 603px; padding-left: 4px; gap: 8px; }
.quick button:nth-of-type(2) { margin-left: 4px; }
.quick button:nth-of-type(3) { margin-left: 8px; }
.grey { filter: grayscale(1); opacity: .7; }
.bar { width: 1px; height: 18px; background: #d0d0d0; }
.context { width: 84px; height: 30px; text-align: center; background: #effaef; border-top: 4px solid #a8e6a2; color: #777; line-height: 20px; }
h1 { padding-left: 6px; flex: 1; }
h1 span { color: #9a9a9a; }
.winbtns { display: flex; gap: 19px; padding-right: 14px; }
.tabs { display: flex; height: 22px; border-bottom: 1px solid #d0d0d0; }
.tabs button { padding: 0 11px; height: 22px; }
.tabs .file { background: #1a478a; color: #dfe8f5; width: 52px; }
.tabs .active { color: #1f4e94; background: #fafafa; border: 1px solid #d0d0d0; border-bottom: 0; width: 84px; padding: 0; }
.help { margin-left: auto; display: flex; align-items: center; gap: 14px; padding-right: 12px; }
.q { width: 15px; height: 15px; border-radius: 8px; background: #1ea0dc; color: #fff; font-weight: 700; text-align: center; }
.ribbon { height: 92px; background: #fafafa; border-bottom: 1px solid #d0d0d0; padding: 5px 0; }
.group { display: flex; flex-direction: column; justify-content: space-between; height: 83px; border-right: 1px solid #ccc; padding: 0 0 0 4px; width: 210px; }
.big { display: flex; align-items: flex-start; }
.big button { display: flex; flex-direction: column; align-items: center; gap: 3px; line-height: 13px; white-space: nowrap; }
.b1 { width: 44px; }
.b2 { width: 60px; }
.b3 { width: 54px; }
.gname { text-align: center; line-height: 11px; padding-right: 6px; }

.work { flex: 1; display: grid; grid-template-columns: 336px minmax(0, 1fr); gap: 5px; padding: 2px; }
.left { display: flex; flex-direction: column; gap: 4px; }
.panel { border: 1px solid #d0d0d0; padding: 0 1px 1px; display: flex; flex-direction: column; }
.p1 { flex: 441 1 0; }
.p2 { flex: 530 1 0; }
.phead { height: 34px; display: flex; align-items: center; padding: 0 9px 0 9px; }
.pbtns { margin-left: auto; display: flex; gap: 9px; color: #777; }
.scroller { flex: 1; display: grid; grid-template: minmax(0, 1fr) 17px / minmax(0, 1fr) 17px; border: 1px solid #ccc; background: #fff; }
.nook { background: #ececec; }
.tree { display: grid; grid-auto-rows: minmax(0, 1fr); background: #fff; }
.tree.fixed { flex: 1; border: 1px solid #ccc; grid-auto-rows: 26px; }
.tree li { display: flex; align-items: center; padding-left: 5px; white-space: nowrap; color: #f39a1e; }
.tree li.l1 { padding-left: 22px; }
.tree li.l2 { padding-left: 38px; }
.tree li.blue { color: #2bb0f2; }
.tree li span { color: #505050; padding: 0 1px; }
.e { width: 8px; height: 8px; margin-right: 4px; }
.i { width: 22px; height: 22px; margin-right: 3px; }
.tree li .sel, .mols li .sel { background: #cce5f5; padding-right: 4px; }
.vsb { display: flex; flex-direction: column; align-items: center; background: #ececec; padding: 5px 0; width: 17px; }
.hsb { display: flex; align-items: center; background: #ececec; padding: 0 5px; }
.vsb .track { flex: 1; width: 17px; margin: 4px 0; display: flex; flex-direction: column; }
.hsb .track { flex: 1; height: 17px; margin: 0 4px; }
.thumb { background: #c9c9c9; }
.tall { height: 75%; }
.hsb .thumb { width: 41%; height: 17px; }
.end { justify-content: flex-end; }
.end .thumb { height: 40%; }

main { display: flex; flex-direction: column; min-width: 0; }
.doctabs { height: 25px; display: flex; margin-bottom: -1px; }
.doctabs button { display: flex; align-items: center; gap: 2px; padding: 0 10px 0 11px; border: 1px solid #d0d0d0; border-bottom: 0; position: relative; z-index: 1; background: #f5f5f5; height: 25px; }
.dx { margin-left: 8px; }
.frame { flex: 1; background: #e9e9e9; border: 1px solid #c4c4c4; border-top-color: #d0d0d0; border-bottom-width: 2px; padding: 0 6px 5px; display: flex; }
.doc { flex: 1; min-width: 0; background: #f5f5f5; border: 1px solid #c4c4c4; border-top: 0; border-bottom-width: 2px; display: flex; flex-direction: column; }
.subtabs { display: flex; height: 24px; align-items: flex-end; border-bottom: 1px solid #ccc; }
.subtabs button { display: flex; align-items: center; justify-content: center; gap: 3px; height: 21px; border: 1px solid #ccc; border-left: 0; border-bottom: 0; width: 79px; }
.subtabs .on { height: 24px; background: #f5f5f5; width: 83px; margin-bottom: -1px; }
.split { flex: 1; display: grid; grid-template-columns: 371px minmax(0, 1fr); gap: 11px; }
.mols { background: #fff; border-right: 1px solid #ccc; display: grid; grid-template-rows: repeat(7, 18px); }
.mols li { display: flex; align-items: center; padding-left: 17px; }
.mols .ic { padding-left: 15px; gap: 2px; }
.mols li span { padding: 0 1px; line-height: 14px; }
.editor { border-left: 1px solid #ccc; display: flex; flex-direction: column; }
.editor .subtabs { height: 25px; }
.editor .subtabs button { width: 93px; height: 23px; }
.editor .subtabs .on { width: 89px; height: 25px; }
.page { flex: 1; display: flex; flex-direction: column; padding: 12px 11px 11px 11px; }
.row { display: flex; align-items: center; gap: 4px; }
.row .box { flex: 1; }
.row .w40 { flex: 0 0 40%; }
.push { margin-left: auto; }
.sp { margin: 3px 0 15px; }
.box { display: flex; height: 18px; background: #fff; border: 1px solid #b8b8b8; min-width: 0; }
.ro { background: #f0f0f0; }
.box input, .box select { flex: 1; min-width: 0; padding: 0 2px; appearance: none; }
.dd, .box button { width: 17px; border-left: 1px solid #b8b8b8; background: #ececec; display: grid; place-items: center; }
.ck { display: flex; align-items: center; gap: 4px; }
input[type=checkbox] { appearance: none; width: 11px; height: 11px; border: 1px solid #aaa; background: #fff; display: block; }
input[type=checkbox]:checked::before { content: ""; display: block; width: 9px; height: 9px; background: #3c3c3c; clip-path: polygon(8% 50%, 22% 36%, 42% 58%, 78% 8%, 94% 20%, 46% 88%); }
.outer { flex: 1; border: 1px solid #d0d0d0; padding: 9px 3px 3px; display: flex; flex-direction: column; gap: 5px; }
.inner { flex: 1; border: 1px solid #d0d0d0; padding: 25px 11px 0 8px; }
.amount .box:last-child { flex: 0 0 541px; }
.tbox { margin: 18px 0 4px; border: 1px solid #c4c4c4; background: #fff; height: 130px; }
table { border-collapse: separate; border-spacing: 0; width: 100%; table-layout: fixed; }
th, td { text-align: left; font-weight: 400; padding: 0 3px; white-space: nowrap; overflow: hidden; border-bottom: 1px solid #d4d4d4; border-right: 1px solid #d4d4d4; }
.calc tr > :last-child { border-right: 0; }
.calc th { height: 19px; background: #f5f5f5; border-bottom-color: #c4c4c4; padding-left: 4px; }
.calc .ind { width: 17px; padding: 0; }
.calc td { height: 20px; }
.calc td:nth-child(2) { background: #f0f0f0; }
.calc .hot td { background: #e5f1fb; }

.compare { border: 1px solid #ccc; margin-top: 4px; height: 158px; display: flex; flex-direction: column; }
.chead { display: flex; align-items: center; padding: 9px 11px 0 11px; }
.ctools { display: flex; align-items: center; gap: 7px; font-size: 12px; padding: 15px 0 0 8px; }
.ctools button { display: flex; align-items: center; gap: 3px; line-height: 16px; }
.ctools button:disabled { color: #b0b0b0; }
.grip { width: 2px; height: 14px; background: #d4d4d4; }
.nodiff { margin: auto; font: italic 18px/24px "Open Sans", sans-serif; padding: 12px 0 0; }

.status { background: #1a478a; height: 30px; display: flex; align-items: center; gap: 9px; color: #dbe6f4; padding: 0 7px 0 156px; white-space: nowrap; border-bottom: 1px solid #9aa8bc; }
.ver { margin-left: auto; }

.overlay { position: absolute; inset: 0; display: grid; place-items: center; }
.dialog { width: 652px; background: #f5f5f5; border: 1px solid #2b579a; padding: 0 5px 5px; display: flex; flex-direction: column; }
.dhead { display: flex; align-items: center; height: 25px; gap: 4px; padding: 2px 0 0 2px; }
.dhead h2 { flex: 1; }
.dhead button { width: 34px; height: 14px; background: #cf5747; color: #fff; display: grid; place-items: center; margin-bottom: 1px; }
.dbody { border: 1px solid #d4d4d4; padding: 13px 11px 10px; }
.grid { border: 1px solid #ccc; margin-top: 3px; background: #fff; }
.gpanel { height: 38px; background: #f5f5f5; display: flex; align-items: center; justify-content: space-between; padding: 0 6px 0 5px; border-bottom: 1px solid #ccc; }
.gpanel button { display: flex; align-items: center; gap: 12px; border: 1px solid #ccc; height: 19px; padding: 0 6px 0 4px; }
.gpanel > svg { margin-bottom: 4px; }
.gmain { display: grid; grid-template-columns: minmax(0, 1fr) 17px; align-items: start; }
.deps { height: 430px; margin-bottom: 11px; }
.deps th { height: 19px; background: #f5f5f5; }
.deps .c { width: 60px; }
.deps td { height: 18px; line-height: 14px; background: #f1f1f1; }
.deps td:first-child { background: #fff; }
.deps td input { margin: 0 auto; }
.deps .g th { height: 21px; font-family: "Noto Sans", sans-serif; font-weight: 700; border-right: 0; padding-left: 8px; }
.deps .g svg { display: inline-block; margin-right: 4px; }
.gside { height: 100%; display: flex; flex-direction: column; }
.corner { height: 19px; background: #f5f5f5; border-bottom: 1px solid #d4d4d4; }
.gside .vsb { flex: 1; }
.dfoot { border: 1px solid #c8c8c8; height: 43px; display: flex; justify-content: flex-end; gap: 6px; padding: 8px 6px; }
.dfoot button { width: 105px; height: 25px; border: 1px solid #bbb; background: #efefef; display: flex; align-items: center; padding: 0 1px; }
.dfoot span { flex: 1; text-align: center; }
.dfoot .ok { background: #e3f0fb; border-color: #9ccbee; }

.taskbar { height: 48px; background: #dce4ef; display: flex; align-items: center; justify-content: space-between; font-size: 11px; line-height: 16px; color: #222; }
.weather { display: flex; align-items: center; gap: 3px; padding: 0 0 2px 21px; width: 240px; }
.weather span { color: #666; }
.center { display: flex; align-items: center; height: 48px; padding: 0 2px 2px 0; }
.t { width: 44px; height: 46px; display: grid; place-items: center; border-radius: 4px; }
.run { background: linear-gradient(#777, #777) center 41px / 6px 3px no-repeat; }
.cur { background: linear-gradient(#1384dc, #1384dc) center 36px / 15px 3px no-repeat, #edf2f8; width: 38px; height: 40px; margin-left: 3px; }
.search { width: 218px; height: 32px; margin: 0 3px; border-radius: 16px; background: #f6f9fc; border: 1px solid #c8d2df; display: flex; align-items: center; gap: 9px; padding-left: 10px; }
.search input { font-size: 13px; width: 150px; }
.search input::placeholder { color: #555; opacity: 1; }
.clock { text-align: right; padding: 0 20px 2px 0; width: 240px; }
```
